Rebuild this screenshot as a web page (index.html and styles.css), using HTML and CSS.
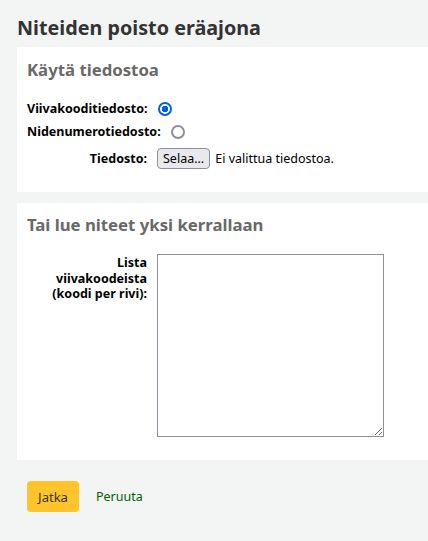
FILE: index.html
```html
<!DOCTYPE html>
<html lang="fi">
<head>
<meta charset="utf-8">
<link rel="stylesheet" href="styles.css">
</head>
<body>
<main class="page">
  <h1 class="title">Niteiden poisto eräajona</h1>
  <form class="form">
    <fieldset class="box box1">
      <legend class="legend">Käytä tiedostoa</legend>
      <ol class="rows">
        <li class="row-radio">
          <label class="lbl-inline">Viivakooditiedosto:</label>
          <span class="radio checked"></span>
        </li>
        <li class="row-radio">
          <label class="lbl-inline">Nidenumerotiedosto:</label>
          <span class="radio"></span>
        </li>
        <li class="row">
          <label class="lbl">Tiedosto:</label>
          <span class="file">
            <span class="file-btn">Selaa...</span>
            <span class="file-text">Ei valittua tiedostoa.</span>
          </span>
        </li>
      </ol>
    </fieldset>
    <fieldset class="box box2">
      <legend class="legend">Tai lue niteet yksi kerrallaan</legend>
      <ol class="rows">
        <li class="row row-top">
          <label class="lbl">Lista viivakoodeista (koodi per rivi):</label>
          <textarea class="area"></textarea>
        </li>
      </ol>
    </fieldset>
    <div class="actions">
      <button type="button" class="btn-primary">Jatka</button>
      <a class="cancel" href="#">Peruuta</a>
    </div>
  </form>
</main>
</body>
</html>
```

FILE: styles.css
```css
html, body {
  margin: 0;
  padding: 0;
  background: #f3f4f4;
}
body {
  font-family: "Noto Sans", "DejaVu Sans", sans-serif;
  font-size: 12.5px;
  color: #000;
}
.page {
  padding: 13px 0 0 17px;
}
.title {
  margin: 0 0 4px 0;
  font-size: 19.75px;
  font-weight: 700;
  color: #333;
  line-height: 30px;
}
.form {
  margin: 0;
}
.box {
  margin: 0 0 11px 0;
  padding: 10px 10px 23px 10px;
  border: 0;
  background: #fff;
  min-width: 0;
}
.box1 {
  padding-top: 11px;
}
.box2 {
  padding-top: 10px;
}
.legend {
  float: left;
  width: 100%;
  padding: 0;
  margin: 0 0 15px 0;
  font-size: 16.75px;
  font-weight: 700;
  color: #696969;
  line-height: 24px;
}
.box2 .legend {
  margin-bottom: 17px;
}
.rows {
  clear: both;
  list-style: none;
  margin: 0;
  padding: 0;
}
.row-radio {
  display: flex;
  align-items: center;
  gap: 10px;
  height: 23px;
}
.lbl-inline {
  font-weight: 700;
}
.row {
  display: flex;
  align-items: center;
  margin-top: 5px;
}
.row-top {
  align-items: flex-start;
  margin-top: 0;
}
.lbl {
  width: 120px;
  flex: none;
  text-align: right;
  font-weight: 700;
  margin-right: 10px;
  line-height: 15.5px;
}
.row-top .lbl {
  padding-top: 1px;
}
.radio {
  width: 14px;
  height: 14px;
  box-sizing: border-box;
  border: 2px solid #8f8f9d;
  border-radius: 50%;
  background: #fff;
}
.radio.checked {
  border-color: #0060df;
  background: radial-gradient(circle, #0060df 0 3px, #fff 3.5px);
}
.file {
  display: flex;
  align-items: center;
  gap: 5px;
}
.file-btn {
  border: 1px solid #8f8f9d;
  border-radius: 4px;
  background: #e9e9ed;
  padding: 1px 5px;
  line-height: 17px;
}
.file-text {
  color: #000;
}
.area {
  width: 227px;
  height: 183px;
  box-sizing: border-box;
  border: 1px solid #8f8f9d;
  margin: 0;
  padding: 2px;
  background: #fff;
  font: inherit;
}
.actions {
  display: flex;
  align-items: center;
  gap: 17px;
  padding: 10px 0 0 10px;
}
.btn-primary {
  font: inherit;
  font-size: 13px;
  background: #ffc32b;
  border: 0;
  border-radius: 4px;
  width: 52px;
  height: 31px;
  color: #333;
  padding: 0;
}
.cancel {
  color: #006100;
  text-decoration: none;
}
```
